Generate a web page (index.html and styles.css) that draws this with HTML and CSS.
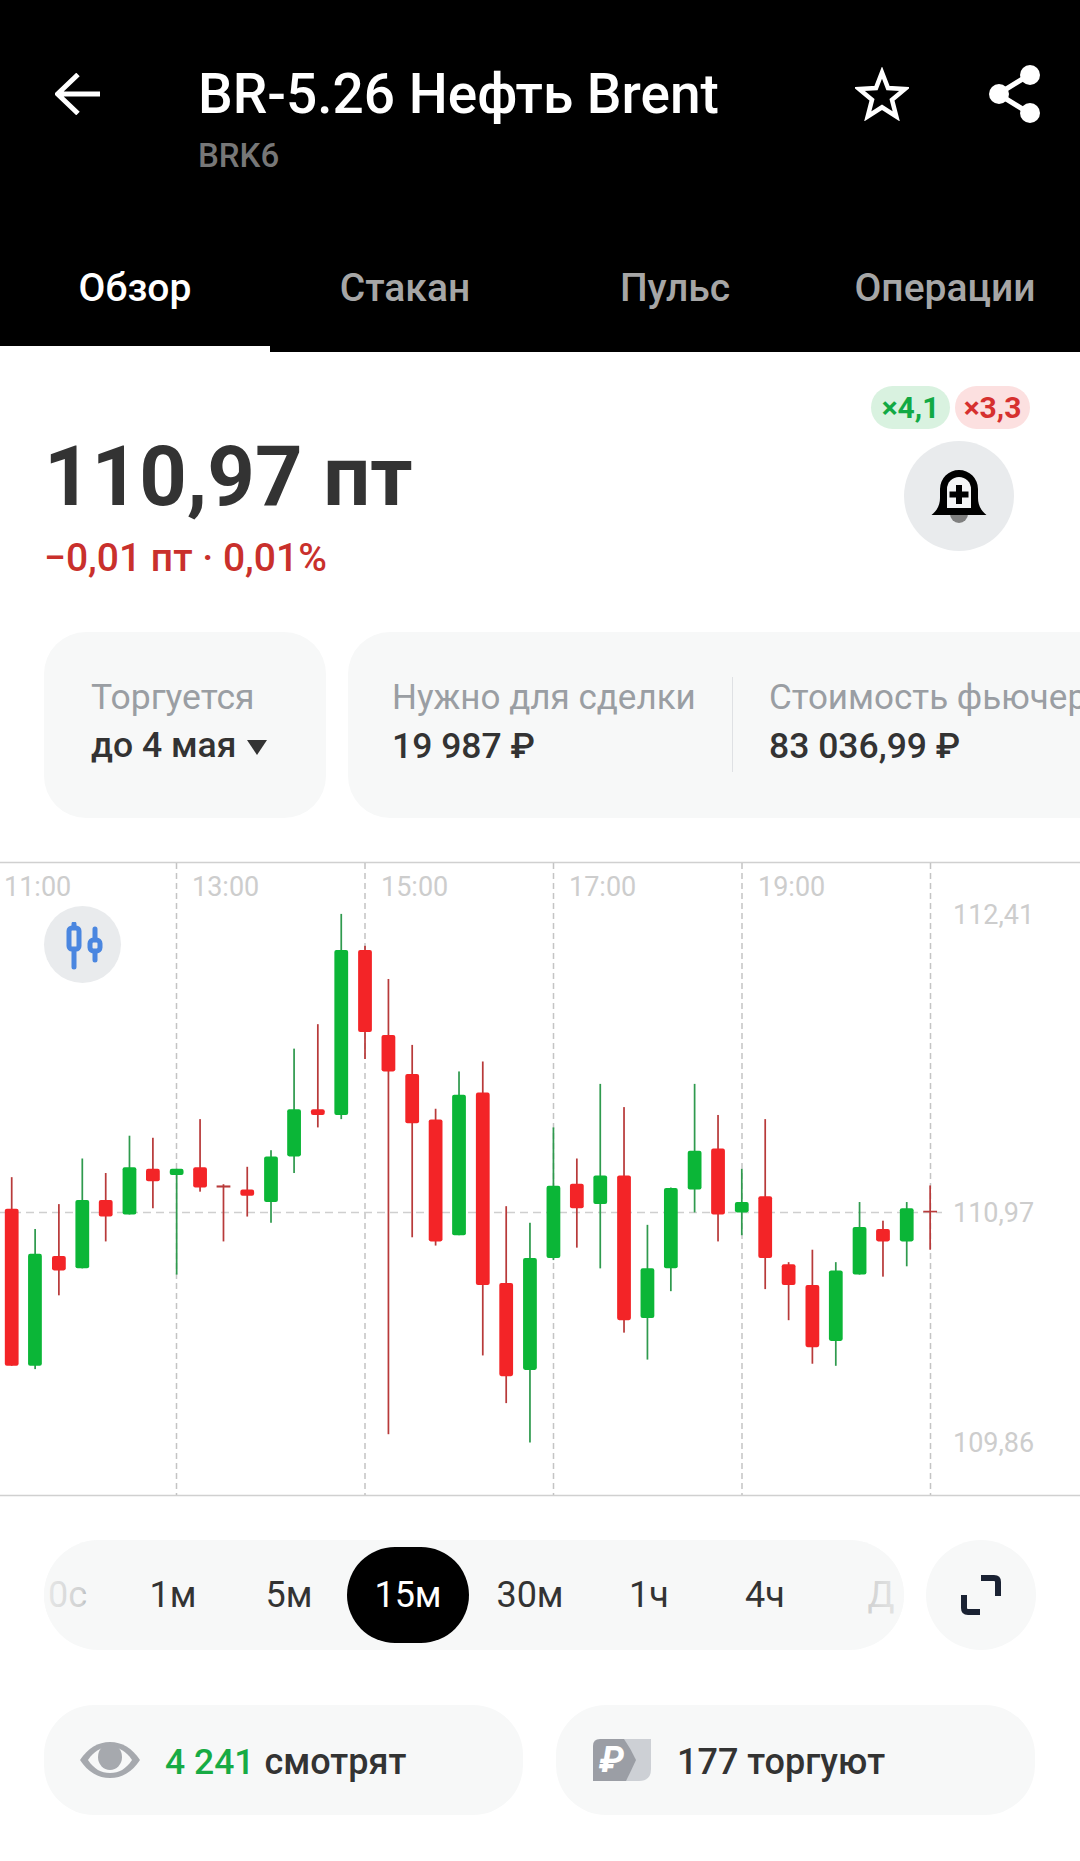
FILE: index.html
```html
<!DOCTYPE html>
<html lang="ru">
<head>
<meta charset="utf-8">
<title>BR-5.26 Нефть Brent</title>
<link rel="stylesheet" href="styles.css">
</head>
<body>
<header class="header">
  <div class="top-bar">
    <div class="back-cell">
      <svg class="back-icon" viewBox="0 0 45 42" width="45" height="42"><path d="M45 21H3M23 1.5 2.5 21 23 40.5" fill="none" stroke="#fff" stroke-width="5"/></svg>
    </div>
    <div class="title-block">
      <div class="title">BR-5.26 Нефть Brent</div>
      <div class="ticker">BRK6</div>
    </div>
    <svg class="star-icon" viewBox="0 0 54 54" width="54" height="54"><path d="M27 5.500 33 21l17 1-13 10.800 4.300 16.700L27 40.300 12.700 49.500 17 32.800 4 22l17-1Z" fill="none" stroke="#fff" stroke-width="4.500" stroke-linejoin="miter"/></svg>
    <svg class="share-icon" viewBox="0 0 52 58" width="52" height="58"><path d="M40 10 9 29l31 19" fill="none" stroke="#fff" stroke-width="5"/><circle cx="41" cy="10" r="10" fill="#fff"/><circle cx="10" cy="29" r="10" fill="#fff"/><circle cx="41" cy="48" r="10" fill="#fff"/></svg>
  </div>
  <nav class="tabs">
    <div class="tab tab-active">Обзор</div>
    <div class="tab">Стакан</div>
    <div class="tab">Пульс</div>
    <div class="tab">Операции</div>
  </nav>
</header>

<section class="quote">
  <div class="quote-left">
    <div class="price">110,97 пт</div>
    <div class="change">−0,01 пт · 0,01%</div>
  </div>
  <div class="quote-right">
    <div class="chips">
      <span class="chip chip-green">×4,1</span>
      <span class="chip chip-red">×3,3</span>
    </div>
    <div class="bell-button">
      <svg viewBox="0 0 56 56" width="56" height="56"><path d="M19 44a9 9 0 0 0 18 0Z" fill="#808080"/><path d="M0.500 45C7 40 9 34 9 28V19a19 19 0 0 1 38 0v9c0 6 2 12 8.500 17Z" fill="#000"/><path d="M16 38V19a12 12 0 0 1 24 0v19Z" fill="#f4f5f6"/><path d="M25 15h6v6.500h6.500v6H31v6.500h-6v-6.500h-6.500v-6H25Z" fill="#000"/></svg>
    </div>
  </div>
</section>

<section class="cards">
  <div class="card card-small">
    <div class="card-label">Торгуется</div>
    <div class="card-value">до 4 мая <span class="caret"></span></div>
  </div>
  <div class="card card-wide">
    <div class="card-item card-item-first">
      <div class="card-label">Нужно для сделки</div>
      <div class="card-value">19 987 ₽</div>
    </div>
    <div class="card-item">
      <div class="card-label">Стоимость фьючерса</div>
      <div class="card-value">83 036,99 ₽</div>
    </div>
  </div>
</section>

<section class="chart">
  <svg class="chart-svg" viewBox="0 0 1080 640" width="1080" height="640">
    <g class="grid">
      <path class="grid-solid" d="M0 2.500H1080M0 635.500H1080"/>
      <path class="grid-dash" d="M176.500 3V635M365 3V635M553.500 3V635M742 3V635M930.500 3V635"/>
      <path class="grid-dash-h" d="M0 352.500H942"/>
    </g>
    <g class="labels">
      <text x="4" y="36">11:00</text><text x="192" y="36">13:00</text><text x="381" y="36">15:00</text><text x="569" y="36">17:00</text><text x="758" y="36">19:00</text>
      <text x="953" y="64">112,41</text><text x="953" y="362">110,97</text><text x="953" y="592">109,86</text>
    </g>
    <g transform="scale(0.34435 0.41459)">
      <g class="up">
        <rect class="w" x="99.500" y="890" height="338"/><rect class="b" x="81.500" y="950" height="270"/>
        <rect class="w" x="236.500" y="720" height="265"/><rect class="b" x="219" y="820" height="165"/>
        <rect class="w" x="373.500" y="665" height="190"/><rect class="b" x="356" y="741" height="114"/>
        <rect class="w" x="510.500" y="745" height="255"/><rect class="b" x="493" y="745" height="15"/>
        <rect class="w" x="784.500" y="700" height="175"/><rect class="b" x="767" y="715" height="110"/>
        <rect class="w" x="851.500" y="455" height="300"/><rect class="b" x="834" y="601" height="114"/>
        <rect class="w" x="988.500" y="130" height="495"/><rect class="b" x="971" y="217" height="398"/>
        <rect class="w" x="1330.500" y="510" height="395"/><rect class="b" x="1313" y="566" height="339"/>
        <rect class="w" x="1536.500" y="875" height="530"/><rect class="b" x="1519" y="960" height="270"/>
      </g>
      <g class="down">
        <rect class="w" x="31.500" y="765" height="455"/><rect class="b" x="14" y="841" height="379"/>
        <rect class="w" x="168.500" y="830" height="220"/><rect class="b" x="151" y="955" height="35"/>
        <rect class="w" x="304.500" y="755" height="165"/><rect class="b" x="287" y="820" height="40"/>
        <rect class="w" x="441.500" y="670" height="170"/><rect class="b" x="424" y="745" height="30"/>
        <rect class="w" x="578.500" y="625" height="175"/><rect class="b" x="561" y="741" height="49"/>
        <rect class="w" x="646.500" y="782" height="138"/><rect class="t" x="629" y="785" height="5"/>
        <rect class="w" x="715.500" y="740" height="120"/><rect class="b" x="698" y="795" height="15"/>
        <rect class="w" x="920.500" y="396" height="249"/><rect class="b" x="903" y="601" height="14"/>
        <rect class="w" x="1057.500" y="207" height="273"/><rect class="b" x="1040" y="217" height="198"/>
        <rect class="w" x="1125.500" y="287" height="1098"/><rect class="b" x="1108" y="422" height="88"/>
        <rect class="w" x="1194.500" y="446" height="464"/><rect class="b" x="1177" y="516" height="119"/>
        <rect class="w" x="1262.500" y="600" height="330"/><rect class="b" x="1245" y="626" height="294"/>
        <rect class="w" x="1399.500" y="486" height="709"/><rect class="b" x="1382" y="561" height="464"/>
        <rect class="w" x="1467.500" y="835" height="475"/><rect class="b" x="1450" y="1020" height="225"/>
      </g>
    </g>
    <g transform="translate(540 0) scale(0.34435 0.41459)">
      <g class="up">
        <rect class="w" x="36.500" y="645" height="320"/><rect class="b" x="19" y="786" height="174"/>
        <rect class="w" x="172.500" y="540" height="445"/><rect class="b" x="155" y="761" height="69"/>
        <rect class="w" x="309.500" y="880" height="325"/><rect class="b" x="292" y="985" height="120"/>
        <rect class="w" x="377.500" y="790" height="250"/><rect class="b" x="360" y="791" height="194"/>
        <rect class="w" x="446.500" y="540" height="310"/><rect class="b" x="429" y="701" height="94"/>
        <rect class="w" x="583.500" y="745" height="160"/><rect class="b" x="566" y="825" height="25"/>
        <rect class="w" x="856.500" y="970" height="250"/><rect class="b" x="839" y="990" height="170"/>
        <rect class="w" x="925.500" y="825" height="175"/><rect class="b" x="908" y="885" height="115"/>
        <rect class="w" x="1062.500" y="825" height="155"/><rect class="b" x="1045" y="840" height="80"/>
      </g>
      <g class="down">
        <rect class="w" x="104.500" y="720" height="215"/><rect class="b" x="87" y="781" height="59"/>
        <rect class="w" x="241.500" y="596" height="544"/><rect class="b" x="224" y="761" height="349"/>
        <rect class="w" x="514.500" y="615" height="305"/><rect class="b" x="497" y="696" height="159"/>
        <rect class="w" x="651.500" y="625" height="410"/><rect class="b" x="634" y="811" height="149"/>
        <rect class="w" x="719.500" y="970" height="140"/><rect class="b" x="702" y="975" height="50"/>
        <rect class="w" x="788.500" y="940" height="275"/><rect class="b" x="771" y="1025" height="150"/>
        <rect class="w" x="993.500" y="870" height="135"/><rect class="b" x="976" y="890" height="30"/>
        <rect class="w" x="1130.500" y="785" height="155"/><rect class="t" x="1113" y="846" height="4"/>
      </g>
    </g>
  </svg>
  <div class="indicator-button">
    <svg viewBox="0 0 44 50" width="44" height="50"><path d="M13 2V45M34 7V38" fill="none" stroke="#4a86e0" stroke-width="5" stroke-linecap="round"/><rect x="8" y="6" width="10" height="21" rx="3" fill="#e9ebed" stroke="#4a86e0" stroke-width="5"/><rect x="29" y="18" width="10" height="11" rx="3.500" fill="#e9ebed" stroke="#4a86e0" stroke-width="5"/></svg>
  </div>
</section>

<section class="range-row">
  <div class="range-pill">
    <span class="range-item range-first range-wide">10с</span>
    <span class="range-item">1м</span>
    <span class="range-item">5м</span>
    <span class="range-item range-wide range-active">15м</span>
    <span class="range-item range-wide">30м</span>
    <span class="range-item">1ч</span>
    <span class="range-item">4ч</span>
    <span class="range-item">Д</span>
    <span class="fade fade-left"></span>
    <span class="fade fade-right"></span>
  </div>
  <div class="expand-button">
    <svg viewBox="0 0 40 40" width="40" height="40"><path d="M20 3h13q4 0 4 4v14M3 20v13q0 4 4 4h12" fill="none" stroke="#1a2233" stroke-width="6"/></svg>
  </div>
</section>

<section class="stats">
  <div class="stat stat-watch">
    <svg class="eye-icon" viewBox="0 0 60 36" width="60" height="36"><path d="M0 18C8 6 18 0 30 0s22 6 30 18C52 30 42 36 30 36S8 30 0 18Z" fill="#a6a9ae"/><path d="M8 18C14 9 21 5 30 5s16 4 22 13C46 27 39 31 30 31S14 27 8 18Z" fill="#f7f8f8"/><ellipse cx="30" cy="15" rx="12" ry="13" fill="#a6a9ae"/></svg>
    <span class="stat-count">4 241</span>
    <span class="stat-text">смотрят</span>
  </div>
  <div class="stat stat-trade">
    <svg class="ruble-icon" viewBox="0 0 58 42" width="58" height="42">
      <path d="M20 0H58V30q0 12-12 12H20Z" fill="#cdd0d5"/>
      <path d="M7 0H31Q38 10 43 21 38 32 33 42H0V7q0-7 7-7Z" fill="#9b9ea5"/>
      <text class="ruble-glyph" x="18.500" y="33">₽</text>
    </svg>
    <span class="stat-text">177 торгуют</span>
  </div>
</section>
</body>
</html>
```
FILE: styles.css
```css
* { box-sizing: border-box; }
html, body { margin: 0; padding: 0; background: #fff; }
body {
  width: 1080px;
  height: 1861px;
  overflow: hidden;
  font-family: Roboto, "Noto Sans", sans-serif;
  color: #333;
}

/* header */
.header { background: #000; height: 352px; display: flex; flex-direction: column; }
.top-bar { height: 263px; display: flex; align-items: flex-start; position: relative; }
.back-cell { width: 199px; padding: 73px 0 0 55px; }
.back-icon, .star-icon, .share-icon { display: block; }
.title-block { width: 656px; padding-top: 64px; }
.title { font-size: 55px; line-height: 60px; font-weight: 500; color: #fff; white-space: nowrap; margin-left: -1px; }
.ticker { font-size: 33px; line-height: 40px; margin-top: 12px; font-weight: 500; color: #777; margin-left: -1px; }
.star-icon { margin-top: 67px; }
.share-icon { margin: 65px 0 0 80px; }
.tabs { height: 89px; display: grid; grid-template-columns: repeat(4, 270px); }
.tab {
  font-size: 39px; font-weight: 500; color: #a6a6a6;
  text-align: center; line-height: 50px;
  border-bottom: 6px solid #000;
}
.tab-active { color: #fff; border-bottom-color: #fff; }

/* quote */
.quote { height: 280px; display: flex; justify-content: space-between; padding: 34px 50px 0 45px; }
.quote-left { padding-top: 46px; }
.price { font-size: 83px; line-height: 90px; font-weight: 700; color: #333; margin-left: -1px; }
.change { font-size: 39px; line-height: 44px; margin-top: 14px; font-weight: 500; color: #c9302c; margin-left: -1px; }
.quote-right { display: flex; flex-direction: column; align-items: flex-end; }
.chips { display: flex; gap: 5px; }
.chip { height: 43px; line-height: 43px; border-radius: 22px; text-align: center; font-size: 30px; font-weight: 700; }
.chip-green { width: 79px; background: #d9f2e0; color: #12a944; }
.chip-red { width: 75px; background: #fce0e0; color: #d6302f; }
.bell-button {
  width: 110px; height: 110px; border-radius: 50%; background: #e9ebed;
  margin: 12px 16px 0 0; display: flex; justify-content: center; padding-top: 29px;
}

/* cards */
.cards { display: flex; gap: 22px; padding-left: 44px; overflow: hidden; }
.card { background: #f7f8f8; height: 186px; border-radius: 42px; flex: none; padding-top: 40px; }
.card-small { width: 282px; padding-left: 47px; }
.card-wide { width: 900px; padding: 41px 0 0 44px; display: flex; }
.card-label { font-size: 35.5px; line-height: 50px; color: #9a9ea3; white-space: nowrap; }
.card-wide .card-label { font-size: 35px; }
.card-value { font-size: 35.5px; line-height: 46px; font-weight: 500; color: #333; white-space: nowrap; }
.card-item { white-space: nowrap; height: 95px; padding-left: 36px; }
.card-item-first { width: 341px; padding-left: 0; position: relative; }
.card-item-first::after {
  content: ""; position: absolute; right: 0; top: 4px; height: 95px; width: 1px; background: #dfe1e4;
}
.caret {
  display: inline-block; width: 0; height: 0; margin-left: 2px; vertical-align: 2px;
  border-left: 10px solid transparent; border-right: 10px solid transparent; border-top: 15px solid #333;
}

/* chart */
.chart { position: relative; margin-top: 42px; height: 640px; }
.chart-svg { display: block; }
.grid-solid { stroke: #d0d0d0; stroke-width: 1.5; fill: none; }
.grid-dash { stroke: #c4c4c4; stroke-width: 1.5; stroke-dasharray: 6 4; fill: none; }
.grid-dash-h { stroke: #cfcfcf; stroke-width: 1.5; stroke-dasharray: 8 5; fill: none; }
.labels text { font-family: Roboto, sans-serif; font-size: 27px; fill: #cdcdcd; }
.up .w { fill: #2f9a4e; width: 5px; }
.down .w { fill: #b83a3a; width: 5px; }
.up .b { fill: #0bb637; width: 40px; rx: 6px; ry: 5px; }
.down .b { fill: #f32427; width: 40px; rx: 6px; ry: 5px; }
.down .t { fill: #b83a3a; width: 40px; }
.indicator-button {
  position: absolute; left: 44px; top: 46px;
  width: 77px; height: 77px; border-radius: 50%; background: #e9ebed;
  display: flex; align-items: center; justify-content: center;
  padding-top: 4px;
}

/* range */
.range-row { display: flex; gap: 22px; padding-left: 44px; margin-top: 40px; }
.range-pill {
  position: relative; width: 860px; height: 110px; border-radius: 55px;
  background: #f7f8f8; display: flex; align-items: center; overflow: hidden; flex: none;
}
.range-item {
  flex: none; width: 116px; height: 96px; line-height: 96px; text-align: center;
  font-size: 36px; color: #333; border-radius: 48px;
}
.range-wide { width: 122px; }
.range-first { margin-left: -51px; padding-left: 7px; }
.range-active { background: #000; color: #fff; }
.fade { position: absolute; top: 0; bottom: 0; width: 64px; }
.fade-left { left: 0; background: linear-gradient(90deg, rgba(247, 248, 248, 0.92), rgba(247, 248, 248, 0.8) 60%, rgba(247, 248, 248, 0)); }
.fade-right { right: 0; background: linear-gradient(270deg, rgba(247, 248, 248, 0.92), rgba(247, 248, 248, 0.8) 60%, rgba(247, 248, 248, 0)); }
.expand-button {
  width: 110px; height: 110px; border-radius: 50%; background: #f7f8f8; flex: none;
  display: flex; align-items: center; justify-content: center;
}

/* stats */
.stats { display: flex; gap: 33px; padding-left: 44px; margin-top: 55px; }
.stat {
  width: 479px; height: 110px; border-radius: 50px; background: #f7f8f8;
  display: flex; align-items: center; font-size: 36px; font-weight: 500; color: #333;
}
.stat-watch { padding-left: 36px; }
.stat-trade { padding-left: 37px; }
.stat-count, .stat-text { position: relative; top: 2px; }
.eye-icon { margin-right: 25px; }
.stat-count { color: #17ab44; margin-right: 10px; font-size: 35.5px; }
.ruble-icon { margin-right: 26px; }
.ruble-glyph { font-family: Roboto, "DejaVu Sans", sans-serif; font-size: 36px; font-weight: 700; font-style: italic; fill: #fff; text-anchor: middle; }
```
